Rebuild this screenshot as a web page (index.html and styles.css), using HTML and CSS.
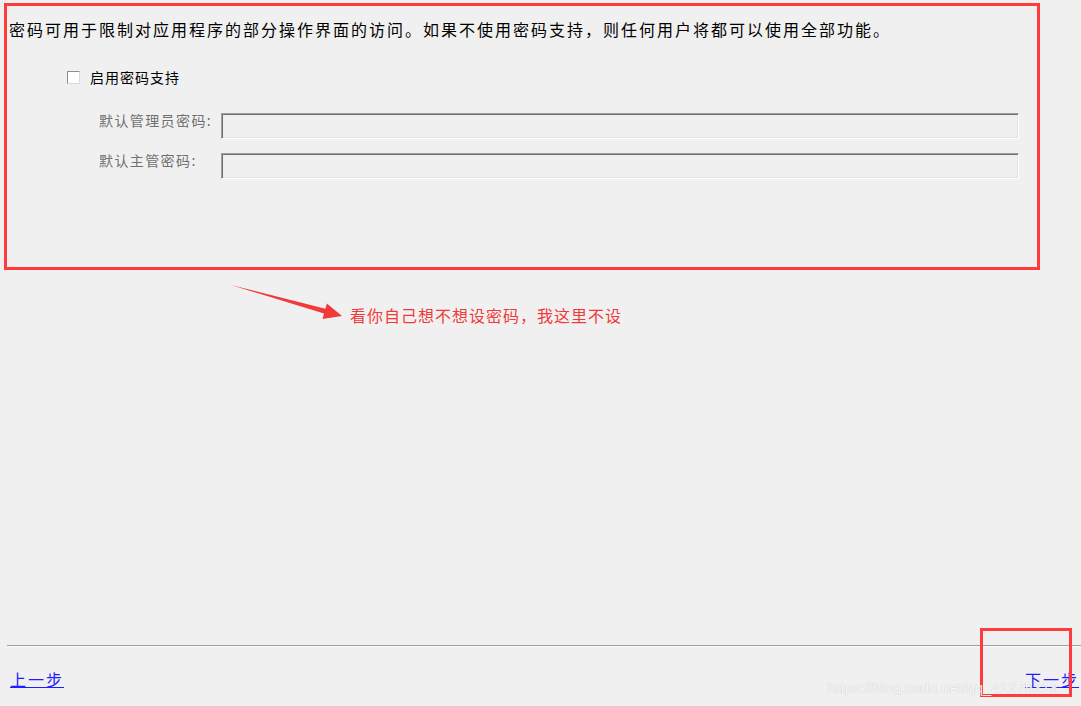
FILE: index.html
```html
<!DOCTYPE html>
<html lang="zh-CN">
<head>
<meta charset="utf-8">
<title>密码设置</title>
<link rel="stylesheet" href="styles.css">
</head>
<body>
<div class="page">
  <p class="intro">密码可用于限制对应用程序的部分操作界面的访问。如果不使用密码支持，则任何用户将都可以使用全部功能。</p>
  <label class="option"><span class="check"></span><span class="option-text">启用密码支持</span></label>
  <div class="fields">
    <span class="field-label">默认管理员密码:</span>
    <input class="field-input" type="password" disabled>
    <span class="field-label">默认主管密码:</span>
    <input class="field-input" type="password" disabled>
  </div>
  <div class="footer">
    <div class="sep"></div>
    <div class="nav">
      <a class="nav-link" href="#">上一步</a>
      <a class="nav-link" href="#">下一步</a>
    </div>
  </div>

  <div class="mark mark-main"></div>
  <div class="mark mark-next"></div>
  <svg class="arrow" width="125" height="45" viewBox="0 0 125 45"><polygon points="6,5 100.4,28.8 101.9,23.5 117,36 97.5,38.9 99,33.6" fill="#f23a3a"/></svg>
  <div class="note">看你自己想不想设密码，我这里不设</div>
  <div class="watermark">https://blog.csdn.net/qq_41375318</div>
</div>
</body>
</html>
```

FILE: styles.css
```css
html, body {
  margin: 0;
  padding: 0;
  background: #f0f0f0;
}
body {
  font-family: "Noto Sans CJK SC", "Noto Sans", sans-serif;
  color: #000;
}
.page {
  position: relative;
  height: 706px;
  display: flex;
  flex-direction: column;
  overflow: hidden;
}
.intro {
  margin: 0;
  padding: 19px 0 0 9px;
  font-size: 16px;
  line-height: 20px;
  letter-spacing: 2px;
  white-space: nowrap;
}
.option {
  display: flex;
  align-items: center;
  margin-top: 28px;
  padding-left: 67px;
  height: 20px;
}
.check {
  box-sizing: border-box;
  width: 13px;
  height: 13px;
  background: #fff;
  border: 1px solid #8c8c8c;
  border-right-color: #dcdcdc;
  border-bottom-color: #dcdcdc;
}
.option-text {
  margin-left: 10px;
  font-size: 14px;
  line-height: 20px;
  letter-spacing: 1px;
}
.fields {
  display: grid;
  grid-template-columns: 122px 798px;
  grid-auto-rows: 26px;
  row-gap: 14px;
  margin-top: 26px;
  padding-left: 99px;
}
.field-label {
  align-self: start;
  margin-top: -3px;
  font-size: 14px;
  line-height: 20px;
  letter-spacing: 1.4px;
  color: #707070;
  white-space: nowrap;
}
.field-input {
  box-sizing: border-box;
  width: 798px;
  height: 26px;
  margin: 0;
  padding: 0;
  background: #f0f0f0;
  border: 1px solid;
  border-color: #a0a0a0 #ffffff #ffffff #a0a0a0;
  box-shadow: inset 1px 1px 0 #6e6e6e, inset -1px -1px 0 #e3e3e3;
  -webkit-appearance: none;
  appearance: none;
}
.footer {
  margin-top: auto;
  padding-left: 7px;
  padding-bottom: 17px;
}
.sep {
  height: 1px;
  background: #a0a0a0;
  box-shadow: 0 1px 0 #fbfbfb;
}
.nav {
  display: flex;
  justify-content: space-between;
  margin-top: 23px;
  padding: 0 2px 0 3px;
}
.nav-link {
  font-size: 16px;
  line-height: 20px;
  letter-spacing: 2px;
  color: #1d1dff;
  text-decoration: underline;
}
.mark {
  position: absolute;
  box-sizing: border-box;
  border: 3px solid #ff3b3b;
}
.mark-main {
  left: 4px;
  top: 3px;
  width: 1036px;
  height: 267px;
}
.mark-next {
  left: 980px;
  top: 628px;
  width: 92px;
  height: 69px;
}
.arrow {
  position: absolute;
  left: 225px;
  top: 280px;
}
.note {
  position: absolute;
  left: 350px;
  top: 305px;
  font-size: 16px;
  line-height: 20px;
  letter-spacing: 1px;
  color: #f03a3a;
  white-space: nowrap;
}
.watermark {
  position: absolute;
  left: 828px;
  top: 678px;
  font-family: "Liberation Sans", Arial, sans-serif;
  font-size: 15px;
  line-height: 20px;
  color: rgba(255, 255, 255, 0.9);
  text-shadow: 0 0 1px rgba(0, 0, 0, 0.25);
  white-space: nowrap;
}
```
